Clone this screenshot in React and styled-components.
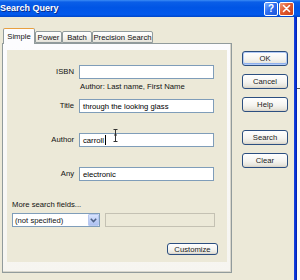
import React from 'react'
import styled, { createGlobalStyle } from 'styled-components'

const GlobalStyle = createGlobalStyle`
  html, body {
    margin: 0;
    padding: 0;
    width: 300px;
    height: 280px;
    overflow: hidden;
    background: #ece9d8;
    font-family: "Liberation Sans", Arial, sans-serif;
  }
`

const App = () => {
    return (
        <>
            <GlobalStyle />
            <Window>
                <TitleBar>
                    <TitleText>Search Query</TitleText>
                    <Spacer />
                    <CaptionButton $kind="help">?</CaptionButton>
                    <CaptionButton $kind="close">
                        <svg width="9" height="9" viewBox="0 0 9 9">
                            <path d="M1.5 1.5 L7.5 7.5 M7.5 1.5 L1.5 7.5" stroke="#fff" strokeWidth="1.6" strokeLinecap="round" />
                        </svg>
                    </CaptionButton>
                </TitleBar>
                <Body>
                    <Content>
                        <LeftCol>
                            <TabStrip>
                                <Tab $active $w={32}>Simple</Tab>
                                <Tab $w={27}>Power</Tab>
                                <Tab $w={30}>Batch</Tab>
                                <Tab $w={61}>Precision Search</Tab>
                            </TabStrip>
                            <Panel>
                                <Inner>
                                    <Row $mt={0}>
                                        <Label>ISBN</Label>
                                        <Field />
                                    </Row>
                                    <Hint>Author: Last name, First Name</Hint>
                                    <Row $mt={7}>
                                        <Label>Title</Label>
                                        <Field>through the looking glass</Field>
                                    </Row>
                                    <Row $mt={20}>
                                        <Label>Author</Label>
                                        <Field>carroll<Caret /></Field>
                                    </Row>
                                    <Row $mt={20}>
                                        <Label>Any</Label>
                                        <Field>electronic</Field>
                                    </Row>
                                    <MoreLabel>More search fields...</MoreLabel>
                                    <SelectRow>
                                        <Select>
                                            <span>(not specified)</span>
                                            <DropButton>
                                                <svg width="7" height="5" viewBox="0 0 7 5">
                                                    <path d="M0.8 0.8 L3.5 3.6 L6.2 0.8" stroke="#4d6185" strokeWidth="1.5" fill="none" />
                                                </svg>
                                            </DropButton>
                                        </Select>
                                        <DisabledField />
                                    </SelectRow>
                                    <SmallButton>Customize</SmallButton>
                                    <IBeam width="5" height="13" viewBox="0 0 5 13">
                                        <path d="M0.5 0.5 H4.5 M2.5 0.5 V12.5 M0.5 12.5 H4.5 M1 6 H4" stroke="#333" strokeWidth="1" fill="none" />
                                    </IBeam>
                                </Inner>
                            </Panel>
                        </LeftCol>
                        <RightCol>
                            <Button $default $mt={0}>OK</Button>
                            <Button $mt={8}>Cancel</Button>
                            <Button $mt={8}>Help</Button>
                            <Button $mt={18}>Search</Button>
                            <Button $mt={8}>Clear</Button>
                        </RightCol>
                    </Content>
                    <Frame />
                    <Outside />
                </Body>
            </Window>
        </>
    )
}

export default App


const Window = styled.div`
  width: 300px;
  height: 280px;
  display: flex;
  flex-direction: column;
  font-size: 7.7px;
  color: #111;
`

const TitleBar = styled.div`
  height: 17px;
  flex: none;
  display: flex;
  align-items: center;
  padding-right: 6px;
  background: linear-gradient(180deg, #3b8cf5 0%, #0a5ee8 12%, #0055e5 45%, #0259ec 85%, #0046c8 100%);
`

const TitleText = styled.div`
  color: #fff;
  font-weight: bold;
  font-size: 9px;
  margin-top: -1px;
  text-shadow: 1px 1px 0 #0b2c8c;
`

const Spacer = styled.div`
  flex: 1;
`

const CaptionButton = styled.div`
  width: ${p => (p.$kind === 'close' ? 15 : 14)}px;
  height: 14px;
  margin-left: ${p => (p.$kind === 'close' ? 1 : 0)}px;
  box-sizing: border-box;
  border: 1px solid #fff;
  border-radius: 2px;
  display: flex;
  align-items: center;
  justify-content: center;
  color: #fff;
  font-weight: bold;
  font-size: 10px;
  background: ${p => (p.$kind === 'close'
        ? 'linear-gradient(135deg, #f39a7a 0%, #e1592e 45%, #c8401c 100%)'
        : 'linear-gradient(135deg, #7fb0ff 0%, #2f6ff0 45%, #1f55d8 100%)')};
`

const Body = styled.div`
  flex: 1;
  display: flex;
`

const Content = styled.div`
  flex: 1;
  display: flex;
  padding: 11px 0 0 2px;
  gap: 10px;
`

const LeftCol = styled.div`
  width: 230px;
  display: flex;
  flex-direction: column;
`

const TabStrip = styled.div`
  height: 16px;
  margin-bottom: -1px;
  padding-left: 1px;
  display: flex;
  align-items: flex-end;
  position: relative;
  z-index: 1;
`

const Tab = styled.div`
  width: ${p => p.$w}px;
  height: ${p => (p.$active ? 16 : 12)}px;
  margin-bottom: ${p => (p.$active ? 0 : 1)}px;
  box-sizing: border-box;
  border: 1px solid #919b9c;
  border-bottom: ${p => (p.$active ? 'none' : '1px solid #919b9c')};
  border-top: ${p => (p.$active ? '1px solid #e8a040' : '1px solid #919b9c')};
  border-radius: 2px 2px 0 0;
  display: flex;
  align-items: center;
  justify-content: center;
  padding-bottom: ${p => (p.$active ? 1 : 0)}px;
  white-space: nowrap;
  background: ${p => (p.$active
        ? '#fcfcfe'
        : 'linear-gradient(180deg, #ffffff 0%, #f4f3ee 60%, #e4e2d8 100%)')};
`

const Panel = styled.div`
  height: 230px;
  box-sizing: border-box;
  border: 1px solid #919b9c;
  padding: 6px 4px 10px 4px;
  background: linear-gradient(180deg, #fcfcfe 0%, #f6f5f0 100%);
  box-shadow: inset -1px -1px 0 #d8d6cc;
`

const Inner = styled.div`
  height: 212px;
  box-sizing: border-box;
  padding-top: 15px;
  background: #ece9d8;
  display: flex;
  flex-direction: column;
  position: relative;
`

const Row = styled.div`
  display: grid;
  grid-template-columns: 67px 135px;
  column-gap: 5px;
  align-items: center;
  height: 14px;
  margin-top: ${p => p.$mt}px;
`

const Label = styled.div`
  text-align: right;
  margin-top: -2px;
  white-space: nowrap;
`

const Field = styled.div`
  height: 14px;
  box-sizing: border-box;
  border: 1px solid #7f9db9;
  background: #fff;
  display: flex;
  align-items: center;
  padding-left: 3px;
  white-space: nowrap;
  color: #000;
`

const Caret = styled.span`
  display: inline-block;
  width: 1px;
  height: 10px;
  margin-left: 1px;
  background: #000;
`

const Hint = styled.div`
  margin: 3px 0 0 73px;
  line-height: 10px;
  white-space: nowrap;
`

const MoreLabel = styled.div`
  margin: 19px 0 0 5px;
  line-height: 10px;
`

const SelectRow = styled.div`
  display: flex;
  gap: 5px;
  margin: 3px 0 0 5px;
  height: 14px;
`

const Select = styled.div`
  width: 88px;
  box-sizing: border-box;
  border: 1px solid #7f9db9;
  background: #fff;
  display: flex;
  align-items: center;
  justify-content: space-between;
  padding: 0 0 0 2px;
`

const DropButton = styled.div`
  width: 11px;
  height: 12px;
  box-sizing: border-box;
  border: 1px solid #b9c9ef;
  border-radius: 1px;
  display: flex;
  align-items: center;
  justify-content: center;
  background: linear-gradient(180deg, #d9e4fd 0%, #bccdf6 60%, #adc0f0 100%);
`

const DisabledField = styled.div`
  width: 110px;
  box-sizing: border-box;
  border: 1px solid #c4c1b3;
  background: #ece9d8;
`

const buttonFace = `
  box-sizing: border-box;
  border: 1px solid #2c4f80;
  border-radius: 3px;
  display: flex;
  align-items: center;
  justify-content: center;
  color: #222;
  background: linear-gradient(180deg, #ffffff 0%, #f5f4f0 55%, #e8e6dd 85%, #d6d0c5 100%);
  white-space: nowrap;
`

const SmallButton = styled.div`
  ${buttonFace}
  align-self: flex-end;
  width: 51px;
  height: 12px;
  margin: 16px 9px 0 0;
`

const IBeam = styled.svg`
  position: absolute;
  left: 106px;
  top: 79px;
`

const RightCol = styled.div`
  width: 46px;
  padding-top: 23px;
  display: flex;
  flex-direction: column;
`

const Button = styled.div`
  ${buttonFace}
  height: 15px;
  margin-top: ${p => p.$mt}px;
  box-shadow: ${p => (p.$default
        ? 'inset 0 0 0 1px #b3cbf6, inset 0 -1px 0 1px #8eb0ee'
        : 'none')};
`

const Frame = styled.div`
  width: 3px;
  background: linear-gradient(90deg, #1a47d6 0%, #0831d9 50%, #00209f 100%);
`

const Outside = styled.div`
  width: 3px;
  background: linear-gradient(180deg, #fbfbfb 0px, #fbfbfb 71px, #555 71px, #555 72px, #fbfbfb 72px);
`
